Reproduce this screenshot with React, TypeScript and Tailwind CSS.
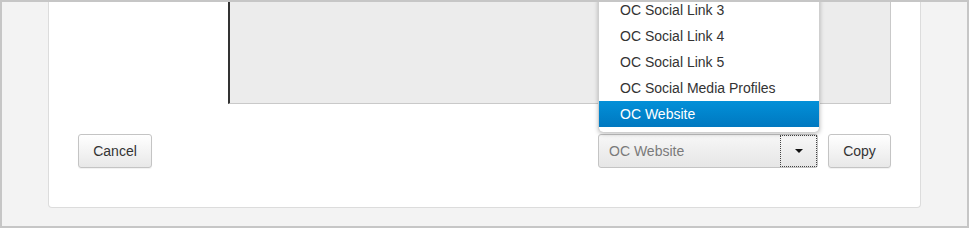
import React from "react";

const font = { fontFamily: '"Liberation Sans", Arial, sans-serif' };

export default function App() {
  const items = ["OC Social Link 3", "OC Social Link 4", "OC Social Link 5", "OC Social Media Profiles"];
  return (
    <div
      className="w-[969px] h-[228px] border-2 border-[#c6c6c6] bg-[#f3f3f3] overflow-hidden relative text-[14px]"
      style={font}
    >
      <div className="ml-[46px] w-[873px] h-[206px] bg-white border-x border-b border-[#dcdcdc] rounded-b-[4px] pl-[29px] flex flex-col">
        <div className="ml-[150px] w-[663px] h-[102px] bg-[#ececec] border-l-2 border-l-[#333] border-b border-r border-[#c9c9c9]" />
        <div className="mt-[30px] flex items-center h-[34px]">
          <button className="h-[34px] w-[74px] rounded-[3px] border border-[#c4c4c4] bg-gradient-to-b from-white to-[#e8e8e8] text-[#333] text-[14px] shadow-[0_1px_1px_rgba(0,0,0,0.06)]">
            Cancel
          </button>
          <div className="ml-[446px] relative">
            <div className="absolute left-0 bottom-[36px] w-[222px] bg-white rounded-b-[5px] shadow-[0_2px_4px_rgba(0,0,0,0.25)] border-x border-[#cfcfcf] pb-[5px]">
              {items.map((t) => (
                <div key={t} className="h-[26px] pl-[21px] flex items-center text-[#333]">
                  {t}
                </div>
              ))}
              <div className="h-[26px] pl-[21px] flex items-center text-white bg-gradient-to-b from-[#0390d8] to-[#0078c0]">
                OC Website
              </div>
            </div>
            <div className="w-[220px] h-[34px] flex rounded-[3px] border border-[#c4c4c4] bg-gradient-to-b from-[#f7f7f7] to-[#e6e6e6]">
              <div className="flex-1 flex items-center pl-[10px] text-[#7a7a7a]">OC Website</div>
              <div className="w-[37px] h-full border border-dotted border-[#444] flex items-center justify-center">
                <svg width="8" height="4" viewBox="0 0 8 4">
                  <polygon points="0,0 8,0 4,4" fill="#111" />
                </svg>
              </div>
            </div>
          </div>
          <button className="ml-[10px] h-[34px] w-[63px] rounded-[3px] border border-[#c4c4c4] bg-gradient-to-b from-white to-[#e8e8e8] text-[#333] text-[14px] shadow-[0_1px_1px_rgba(0,0,0,0.06)]">
            Copy
          </button>
        </div>
      </div>
    </div>
  );
}
